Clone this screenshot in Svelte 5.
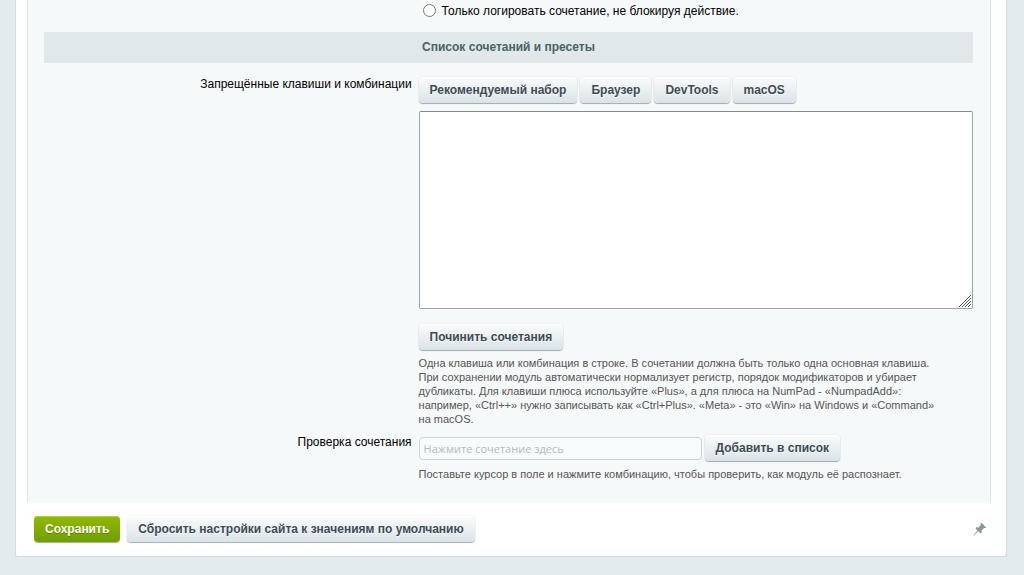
<script>
  const presets = ['Рекомендуемый набор', 'Браузер', 'DevTools', 'macOS'];

  let mode = '';
  let hotkeys = '';
  let probe = '';
</script>

<form class="panel" on:submit|preventDefault>
  <div class="content">
    <div class="row">
      <div class="label"></div>
      <div class="field radio-field">
        <input type="radio" id="mode-log" name="mode" value="log" bind:group={mode} />
        <label for="mode-log">Только логировать сочетание, не блокируя действие.</label>
      </div>
    </div>

    <h2 class="heading">Список сочетаний и пресеты</h2>

    <div class="row">
      <div class="label">
        <label for="hotkeys">Запрещённые клавиши и комбинации</label>
      </div>
      <div class="field">
        <div class="buttons">
          {#each presets as preset}
            <button type="button" class="btn">{preset}</button>
          {/each}
        </div>
        <div class="area">
          <textarea id="hotkeys" bind:value={hotkeys}></textarea>
          <svg class="grip" width="14" height="14" viewBox="0 0 14 14" aria-hidden="true">
            <path d="M1 13L13 1M4 13L13 4M7 13L13 7M10 13L13 10" />
          </svg>
        </div>
        <div class="buttons">
          <button type="button" class="btn">Починить сочетания</button>
        </div>
        <p class="note">
          Одна клавиша или комбинация в строке. В сочетании должна быть только одна основная клавиша.<br />
          При сохранении модуль автоматически нормализует регистр, порядок модификаторов и убирает<br />
          дубликаты. Для клавиши плюса используйте «Plus», а для плюса на NumPad - «NumpadAdd»:<br />
          например, «Ctrl++» нужно записывать как «Ctrl+Plus». «Meta» - это «Win» на Windows и «Command»<br />
          на macOS.
        </p>
      </div>
    </div>

    <div class="row">
      <div class="label">
        <label for="probe">Проверка сочетания</label>
      </div>
      <div class="field">
        <div class="buttons">
          <input type="text" id="probe" class="text" placeholder="Нажмите сочетание здесь" bind:value={probe} />
          <button type="button" class="btn">Добавить в список</button>
        </div>
        <p class="note">Поставьте курсор в поле и нажмите комбинацию, чтобы проверить, как модуль её распознает.</p>
      </div>
    </div>
  </div>

  <div class="footer">
    <button type="submit" class="btn btn-save">Сохранить</button>
    <button type="button" class="btn">Сбросить настройки сайта к значениям по умолчанию</button>
    <button type="button" class="pin" aria-label="Закрепить панель">
      <svg width="14" height="14" viewBox="0 0 14 14" aria-hidden="true">
        <path d="M8.5 0.8L13.2 5.4L12.2 6.3L11.2 6L8.6 8.6L8.8 10.6L7.6 11.6L5.2 9.2L1 13.2L0.6 12.8L4.6 8.6L2.4 6.3L3.4 5.2L5.6 5.4L8 2.8L7.6 1.8Z" />
      </svg>
    </button>
  </div>
</form>

<style>
  :global(body) {
    background: #e2ebed;
    font-family: "Liberation Sans", Arial, sans-serif;
    font-size: 12px;
    line-height: 14px;
    color: #000;
  }

  .panel {
    margin: 0 17px 18px 15px;
    padding: 0 15px 14px 11px;
    background: #fff;
    border: 1px solid #d2dddd;
    border-top: 0;
    border-radius: 0 0 3px 3px;
  }

  .content {
    padding: 2px 17px 13px 16px;
    background: #f5f9f9;
    border: 1px solid #dce7e8;
    border-width: 0 1px;
  }

  .row {
    display: grid;
    grid-template-columns: 2fr 3fr;
  }

  .label {
    padding: 0 4px 0 0;
    text-align: right;
  }

  .field {
    min-width: 0;
    padding-left: 3px;
  }

  .radio-field {
    display: flex;
    align-items: center;
    gap: 6px;
    height: 18px;
    padding-left: 7px;
  }

  .radio-field input {
    width: 13px;
    height: 13px;
    margin: 0 0 2px;
  }

  .heading {
    margin: 12px 0 14px;
    padding: 8px 0 9px;
    background: #e0e8ea;
    color: #4b6267;
    font-size: 12px;
    line-height: 14px;
    text-align: center;
  }

  .buttons {
    display: flex;
    align-items: center;
    gap: 3px;
  }

  .btn {
    box-sizing: border-box;
    height: 26px;
    padding: 0 11px;
    border: 0;
    border-radius: 4px;
    background: linear-gradient(#fbfcfc, #d9e3e7);
    box-shadow: 0 0 1px rgba(0, 0, 0, 0.3), 0 1px 1px rgba(0, 0, 0, 0.3), inset 0 1px #fff;
    color: #3f4b54;
    font-family: inherit;
    font-size: 12px;
    font-weight: bold;
    line-height: 24px;
    text-shadow: 0 1px rgba(255, 255, 255, 0.7);
    white-space: nowrap;
    cursor: pointer;
  }

  .btn-save {
    background: linear-gradient(#91b900, #709f00);
    box-shadow: 0 1px 1px rgba(0, 0, 0, 0.35), inset 0 1px #b0cf38;
    color: #fff;
    text-shadow: 0 1px rgba(70, 100, 0, 0.6);
  }

  .area {
    position: relative;
    margin: 8px 0 15px;
  }

  textarea {
    display: block;
    box-sizing: border-box;
    width: 100%;
    height: 198px;
    padding: 4px;
    border: 1px solid #9aa5a9;
    border-top-color: #808a8e;
    border-radius: 2px;
    background: #fff;
    font-family: inherit;
    font-size: 12px;
    resize: none;
  }

  .grip {
    position: absolute;
    right: 1px;
    bottom: 1px;
    fill: none;
    stroke: #555;
    pointer-events: none;
  }

  .text {
    box-sizing: border-box;
    width: 283px;
    height: 23px;
    padding: 0 4px;
    border: 1px solid #c9d3d5;
    border-radius: 4px;
    background: #f8fbfb;
    font-family: "Open Sans", sans-serif;
    font-size: 11px;
  }

  .text::placeholder {
    color: #b4babb;
  }

  .note {
    margin: 6px 0 9px;
    color: #555;
    font-size: 11px;
  }

  .footer {
    display: flex;
    align-items: center;
    gap: 7px;
    padding: 13px 0 0 7px;
  }

  .pin {
    display: flex;
    margin-left: auto;
    padding: 0 4px 0 0;
    border: 0;
    background: none;
    cursor: pointer;
  }

  .pin path {
    fill: #8f9697;
  }
</style>
